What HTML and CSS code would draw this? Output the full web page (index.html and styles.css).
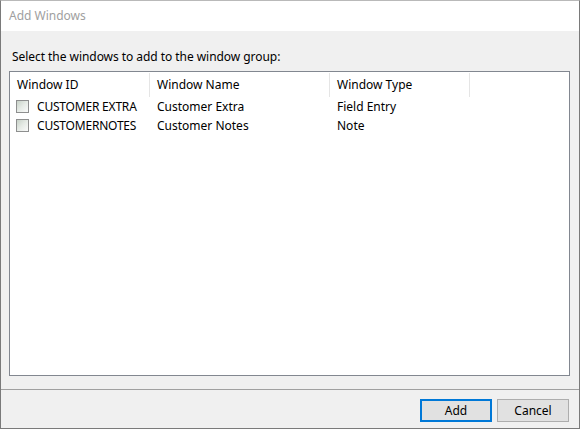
FILE: index.html
```html
<!DOCTYPE html>
<html>
<head>
<meta charset="utf-8">
<link rel="stylesheet" href="styles.css">
</head>
<body>
<div class="window">
  <div class="titlebar">Add Windows</div>
  <div class="content">
    <div class="label">Select the windows to add to the window group:</div>
    <div class="list">
      <div class="header">
        <div class="col c1">Window ID</div>
        <div class="col c2">Window Name</div>
        <div class="col c3">Window Type</div>
        <div class="col c4"></div>
      </div>
      <div class="row">
        <div class="cell c1"><span class="check"></span>CUSTOMER EXTRA</div>
        <div class="cell c2">Customer Extra</div>
        <div class="cell c3">Field Entry</div>
      </div>
      <div class="row">
        <div class="cell c1"><span class="check"></span>CUSTOMERNOTES</div>
        <div class="cell c2">Customer Notes</div>
        <div class="cell c3">Note</div>
      </div>
    </div>
  </div>
  <div class="footer">
    <button class="btn default">Add</button>
    <button class="btn">Cancel</button>
  </div>
</div>
</body>
</html>
```
FILE: styles.css
```css
html, body {
  margin: 0;
  padding: 0;
  background: #ffffff;
}
body {
  font-family: "Noto Sans", "Liberation Sans", sans-serif;
  font-size: 12px;
  color: #000;
}
.window {
  box-sizing: border-box;
  width: 580px;
  height: 429px;
  border: 1px solid #7a7a7a;
  border-top-color: #b9b9b9;
  display: flex;
  flex-direction: column;
  background: #f0f0f0;
}
.titlebar {
  height: 30px;
  background: #ffffff;
  color: #a0a0a0;
  font-size: 12px;
  line-height: 30px;
  padding-left: 8px;
}
.content {
  flex: 1;
  display: flex;
  flex-direction: column;
  padding: 18px 9px 13px 8px;
}
.label {
  height: 16px;
  line-height: 16px;
  padding-left: 3px;
  margin-bottom: 6px;
  letter-spacing: -0.05px;
}
.list {
  flex: 1;
  background: #ffffff;
  border: 1px solid #828790;
}
.header {
  display: flex;
  height: 24px;
  padding-top: 1px;
}
.col {
  box-sizing: border-box;
  height: 24px;
  line-height: 24px;
  padding-left: 7px;
  border-right: 1px solid #e5e5e5;
}
.c1 { width: 140px; }
.c2 { width: 180px; }
.c3 { width: 140px; }
.col.c4 { border-right: none; flex: 1; }
.row {
  display: flex;
  height: 19px;
  line-height: 19px;
}
.cell {
  box-sizing: border-box;
  padding-left: 7px;
  display: flex;
  align-items: center;
  white-space: nowrap;
}
.cell.c1 { padding-left: 6px; letter-spacing: -0.2px; }
.check {
  display: inline-block;
  box-sizing: border-box;
  width: 13px;
  height: 13px;
  border: 1px solid #8e8f8f;
  background: linear-gradient(135deg, #c8d2c8 0%, #e6ebe6 50%, #fafafa 100%);
  margin-right: 8px;
}
.footer {
  height: 39px;
  border-top: 1px solid #a0a0a0;
  display: flex;
  justify-content: flex-end;
  align-items: flex-start;
  padding-top: 9px;
  padding-right: 10px;
  gap: 5px;
  box-sizing: border-box;
}
.btn {
  box-sizing: border-box;
  width: 72px;
  height: 23px;
  font-family: "Noto Sans", "Liberation Sans", sans-serif;
  font-size: 12px;
  color: #000;
  background: #e1e1e1;
  border: 1px solid #adadad;
  padding: 0;
  margin: 0;
}
.btn.default {
  border: 2px solid #0078d7;
}
```
